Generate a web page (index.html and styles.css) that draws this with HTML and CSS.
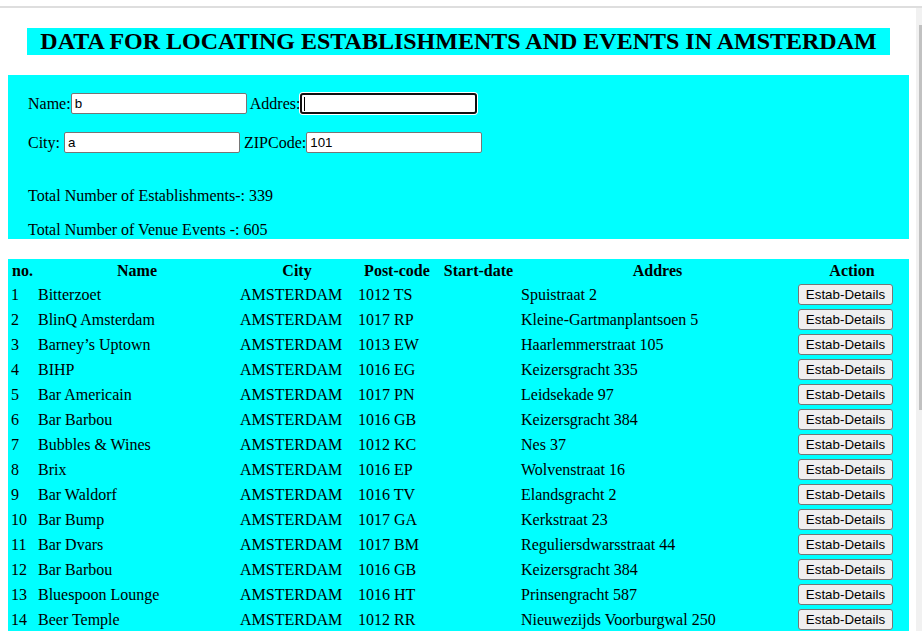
FILE: index.html
```html
<!DOCTYPE html>
<html lang="en">
<head>
<meta charset="utf-8">
<title>Amsterdam establishments and events</title>
<link rel="stylesheet" href="styles.css">
</head>
<body>
<div class="topbar"></div>
<div class="frame">
  <div class="page">
    <div class="content">
      <h2 class="title">DATA FOR LOCATING ESTABLISHMENTS AND EVENTS IN AMSTERDAM</h2>

      <form class="search">
        <div class="field-row">Name:<input class="field" type="text" value="b"> Addres:<input class="field field-focus" type="text" value=""></div>
        <div class="field-row field-row-2">City: <input class="field" type="text" value="a"> ZIPCode:<input class="field" type="text" value="101"></div>
        <p class="total total-first">Total Number of Establishments-: 339</p>
        <p class="total">Total Number of Venue Events -: 605</p>
      </form>

      <table class="results">
        <colgroup>
          <col class="c-no"><col class="c-name"><col class="c-city"><col class="c-post"><col class="c-date"><col class="c-addr"><col class="c-action">
        </colgroup>
        <thead>
          <tr><th>no.</th><th>Name</th><th>City</th><th>Post-code</th><th>Start-date</th><th>Addres</th><th>Action</th></tr>
        </thead>
        <tbody>
          <tr><td>1</td><td>Bitterzoet</td><td>AMSTERDAM</td><td>1012 TS</td><td></td><td>Spuistraat 2</td><td><button class="details-btn" type="button">Estab-Details</button></td></tr>
          <tr><td>2</td><td>BlinQ Amsterdam</td><td>AMSTERDAM</td><td>1017 RP</td><td></td><td>Kleine-Gartmanplantsoen 5</td><td><button class="details-btn" type="button">Estab-Details</button></td></tr>
          <tr><td>3</td><td>Barney’s Uptown</td><td>AMSTERDAM</td><td>1013 EW</td><td></td><td>Haarlemmerstraat 105</td><td><button class="details-btn" type="button">Estab-Details</button></td></tr>
          <tr><td>4</td><td>BIHP</td><td>AMSTERDAM</td><td>1016 EG</td><td></td><td>Keizersgracht 335</td><td><button class="details-btn" type="button">Estab-Details</button></td></tr>
          <tr><td>5</td><td>Bar Americain</td><td>AMSTERDAM</td><td>1017 PN</td><td></td><td>Leidsekade 97</td><td><button class="details-btn" type="button">Estab-Details</button></td></tr>
          <tr><td>6</td><td>Bar Barbou</td><td>AMSTERDAM</td><td>1016 GB</td><td></td><td>Keizersgracht 384</td><td><button class="details-btn" type="button">Estab-Details</button></td></tr>
          <tr><td>7</td><td>Bubbles &amp; Wines</td><td>AMSTERDAM</td><td>1012 KC</td><td></td><td>Nes 37</td><td><button class="details-btn" type="button">Estab-Details</button></td></tr>
          <tr><td>8</td><td>Brix</td><td>AMSTERDAM</td><td>1016 EP</td><td></td><td>Wolvenstraat 16</td><td><button class="details-btn" type="button">Estab-Details</button></td></tr>
          <tr><td>9</td><td>Bar Waldorf</td><td>AMSTERDAM</td><td>1016 TV</td><td></td><td>Elandsgracht 2</td><td><button class="details-btn" type="button">Estab-Details</button></td></tr>
          <tr><td>10</td><td>Bar Bump</td><td>AMSTERDAM</td><td>1017 GA</td><td></td><td>Kerkstraat 23</td><td><button class="details-btn" type="button">Estab-Details</button></td></tr>
          <tr><td>11</td><td>Bar Dvars</td><td>AMSTERDAM</td><td>1017 BM</td><td></td><td>Reguliersdwarsstraat 44</td><td><button class="details-btn" type="button">Estab-Details</button></td></tr>
          <tr><td>12</td><td>Bar Barbou</td><td>AMSTERDAM</td><td>1016 GB</td><td></td><td>Keizersgracht 384</td><td><button class="details-btn" type="button">Estab-Details</button></td></tr>
          <tr><td>13</td><td>Bluespoon Lounge</td><td>AMSTERDAM</td><td>1016 HT</td><td></td><td>Prinsengracht 587</td><td><button class="details-btn" type="button">Estab-Details</button></td></tr>
          <tr><td>14</td><td>Beer Temple</td><td>AMSTERDAM</td><td>1012 RR</td><td></td><td>Nieuwezijds Voorburgwal 250</td><td><button class="details-btn" type="button">Estab-Details</button></td></tr>
        </tbody>
      </table>
    </div>
  </div>
  <div class="scrollbar" aria-hidden="true"><div class="scroll-thumb"></div></div>
</div>
</body>
</html>
```
FILE: styles.css
```css
html, body {
  margin: 0;
  height: 100%;
}

body {
  display: flex;
  flex-direction: column;
  overflow: hidden;
  background: #ffffff;
  color: #000000;
  font-family: "Liberation Serif", "Times New Roman", serif;
  font-size: 16px;
}

.topbar {
  flex: none;
  height: 6px;
  border-bottom: 2px solid #dedede;
}

.frame {
  flex: 1;
  min-height: 0;
  display: flex;
}

.page {
  flex: 1;
  min-width: 0;
  overflow: hidden;
}

.scrollbar {
  flex: none;
  width: 6px;
  padding-top: 17px;
  background: #f1f1f1;
}

.scroll-thumb {
  height: 385px;
  margin-left: 3px;
  background: #c1c1c1;
}

.content {
  padding: 0 7px 8px 8px;
}

.title {
  display: table;
  margin: 20px auto;
  padding: 0 13px;
  background: #00ffff;
  font-size: 24px;
  font-weight: bold;
  line-height: 27px;
}

.search {
  margin: 0;
  padding: 18px 20px 0;
  background: #00ffff;
}

.field-row {
  height: 21px;
  line-height: 21px;
}

.field-row-2 {
  margin-top: 18px;
}

.field {
  box-sizing: border-box;
  width: 176px;
  height: 21px;
  margin: 0;
  padding: 1px 3px;
  vertical-align: top;
  border: 1px solid #767676;
  border-radius: 2px;
  background: #ffffff;
  color: #000000;
  font-family: "Liberation Sans", Arial, sans-serif;
  font-size: 13.333px;
  outline: none;
}

.field-focus {
  width: 177px;
  border: 2px solid #101010;
  border-radius: 3px;
  box-shadow: 0 0 0 1px #ffffff;
  background: #ffffff linear-gradient(#000000, #000000) no-repeat 2px 2px / 1px 14px;
}

.total {
  margin: 16px 0 0;
  line-height: 18px;
}

.total-first {
  margin-top: 34px;
}

.results {
  width: 100%;
  margin-top: 20px;
  table-layout: fixed;
  border-spacing: 2px;
  background: #00ffff;
}

.results th,
.results td {
  padding: 1px;
  white-space: nowrap;
  overflow: hidden;
}

.results th {
  text-align: center;
  font-weight: bold;
}

.results td {
  text-align: left;
}

.c-no { width: 25px; }
.c-name { width: 200px; }
.c-city { width: 116px; }
.c-post { width: 80px; }
.c-date { width: 79px; }
.c-addr { width: 275px; }
.c-action { width: 110px; }

.details-btn {
  display: block;
  box-sizing: border-box;
  width: 95px;
  height: 21px;
  margin: 0;
  padding: 1px 6px;
  border: 1px solid #767676;
  border-radius: 3px;
  background: #efefef;
  color: #000000;
  font-family: "Liberation Sans", Arial, sans-serif;
  font-size: 13.333px;
  line-height: 17px;
  text-align: center;
}
```
